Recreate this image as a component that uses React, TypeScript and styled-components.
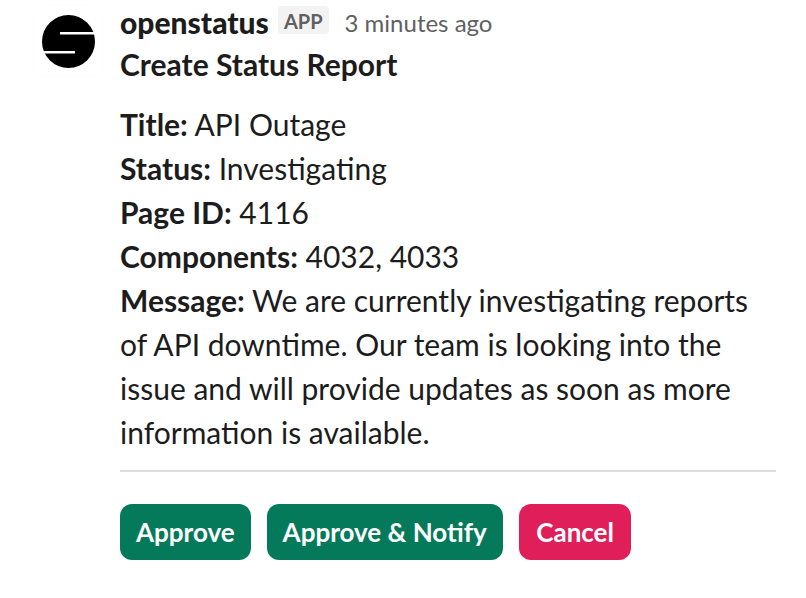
import React, { ReactElement } from 'react';
import styled, { createGlobalStyle } from 'styled-components';

const GlobalStyle = createGlobalStyle`
  html, body {
    margin: 0;
    padding: 0;
    background: #ffffff;
  }
  body {
    font-family: Lato, 'Liberation Sans', sans-serif;
    color: #1d1c1d;
    overflow: hidden;
  }
`;

const Message = styled.div`
  display: flex;
  width: 806px;
  height: 598px;
  box-sizing: border-box;
  padding: 5px 30px 0 32px;
  gap: 16px;
`;

const AvatarBox = styled.div`
  flex: none;
  width: 72px;
  height: 72px;
  border-radius: 14px;
  box-shadow: inset 0 0 0 1px #fdfdfd;
  display: flex;
  align-items: center;
  justify-content: center;
`;

const Body = styled.div`
  flex: 1;
  min-width: 0;
`;

const Header = styled.div`
  display: flex;
  align-items: center;
  height: 34px;
  margin-bottom: 3px;
`;

const Sender = styled.span`
  font-size: 30px;
  font-weight: 900;
`;

const AppTag = styled.span`
  margin: 0 0 4px 9px;
  background: #f3f3f3;
  color: #616061;
  border-radius: 4px;
  font-size: 20px;
  font-weight: 700;
  line-height: 26px;
  padding: 2px 6px 0;
`;

const Time = styled.span`
  margin-left: 16px;
  font-size: 24px;
  color: #616061;
`;

const Title = styled.div`
  font-size: 30px;
  font-weight: 700;
  line-height: 44px;
  margin-bottom: 16px;
`;

const Text = styled.div`
  font-size: 30px;
  line-height: 44px;
  width: 640px;
`;

const Line = styled.div`
  display: block;
`;

const Divider = styled.div`
  height: 2px;
  background: #dddddd;
  margin-top: 16px;
`;

const Actions = styled.div`
  display: flex;
  gap: 16px;
  margin-top: 32px;
`;

const Button = styled.button<{ $danger?: boolean }>`
  height: 56px;
  padding: 0 ${(p) => (p.$danger ? '17.5px' : '16px')};
  border: none;
  border-radius: 12px;
  background: ${(p) => (p.$danger ? '#e01e5a' : '#047a5a')};
  color: #ffffff;
  font-family: inherit;
  font-size: 26px;
  font-weight: 700;
`;

const Logo = (): ReactElement => (
  <svg width='53' height='53' viewBox='0 0 53 53'>
    <circle cx='26.5' cy='26.5' r='26.5' fill='#000' />
    <rect x='18' y='17' width='35' height='2.5' fill='#fff' />
    <rect x='0' y='36' width='33' height='2.5' fill='#fff' />
  </svg>
);

export default function App(): ReactElement {
  return (
    <>
      <GlobalStyle />
      <Message>
        <AvatarBox>
          <Logo />
        </AvatarBox>
        <Body>
          <Header>
            <Sender>openstatus</Sender>
            <AppTag>APP</AppTag>
            <Time>3 minutes ago</Time>
          </Header>
          <Title>Create Status Report</Title>
          <Text>
            <Line><b>Title:</b> API Outage</Line>
            <Line><b>Status:</b> Investigating</Line>
            <Line><b>Page ID:</b> 4116</Line>
            <Line><b>Components:</b> 4032, 4033</Line>
            <Line>
              <b>Message:</b> We are currently investigating reports of API downtime. Our team is
              looking into the issue and will provide updates as soon as more information is
              available.
            </Line>
          </Text>
          <Divider />
          <Actions>
            <Button>Approve</Button>
            <Button>Approve &amp; Notify</Button>
            <Button $danger>Cancel</Button>
          </Actions>
        </Body>
      </Message>
    </>
  );
}
